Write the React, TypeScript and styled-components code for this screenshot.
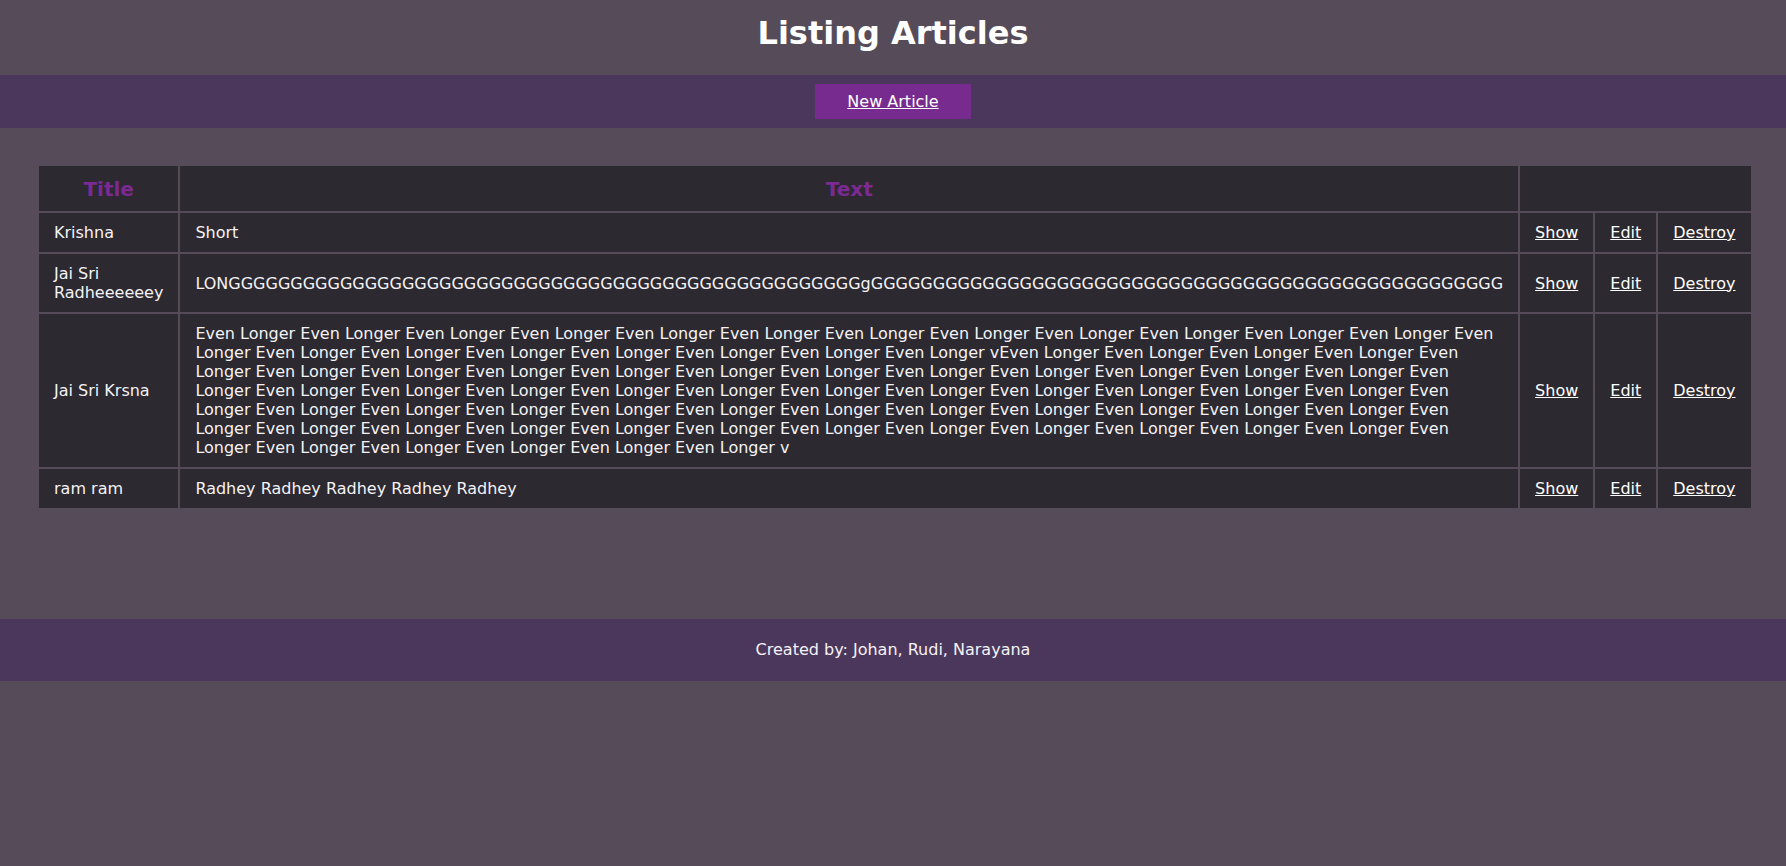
import React from "react";
import styled, { createGlobalStyle } from "styled-components";

const GlobalStyle = createGlobalStyle`
  html, body {
    margin: 0;
    padding: 0;
    background: #564b59;
  }
  body {
    font-family: "DejaVu Sans", "Liberation Sans", sans-serif;
    font-size: 16px;
    color: #f4f2f5;
  }
`;

const Header = styled.header`
  display: flex;
  justify-content: center;
  padding: 14px 0 23px;
`;

const PageTitle = styled.h1`
  margin: 0;
  font-size: 32px;
  font-weight: bold;
  color: #ffffff;
`;

const Nav = styled.nav`
  display: flex;
  justify-content: center;
  background: #4c375c;
  padding: 9px 0;
`;

const NavButton = styled.a`
  display: block;
  background: #782b8f;
  color: #ffffff;
  padding: 8px 32px;
  text-decoration: underline;
  line-height: 19px;
`;

const Main = styled.main`
  padding: 36px 34px 109px 37px;
`;

const Table = styled.table`
  width: 100%;
  border-collapse: collapse;
  background: #2c2930;
`;

const HeadCell = styled.th<{ $shrink?: boolean }>`
  border: 2px solid #564b59;
  color: #7b2a93;
  font-size: 20px;
  font-weight: bold;
  padding: 11px 15px 10px;
  text-align: center;
  ${(p) => (p.$shrink ? "width: 1%;" : "")}
`;

const Cell = styled.td<{ $shrink?: boolean }>`
  border: 2px solid #564b59;
  padding: 10px 15px;
  line-height: 19px;
  vertical-align: middle;
  text-align: left;
  ${(p) => (p.$shrink ? "width: 1%;" : "")}
`;

const ActionCell = styled(Cell)`
  width: 1%;
  white-space: nowrap;
`;

const ActionLink = styled.a`
  color: #ffffff;
  text-decoration: underline;
  cursor: pointer;
`;

const Footer = styled.footer`
  background: #4c375c;
  text-align: center;
  padding: 21px 0 22px;
  line-height: 19px;
`;

const repeat = (s: string, n: number) => Array(n).fill(s).join("");

const evenLonger =
  repeat("Even Longer ", 20) + "v" + repeat("Even Longer ", 58) + "v";

const articles = [
  { title: "Krishna", text: "Short" },
  {
    title: "Jai Sri Radheeeeeey",
    text: "LON" + "G".repeat(51) + "g" + "G".repeat(51),
  },
  { title: "Jai Sri Krsna", text: evenLonger },
  { title: "ram ram", text: "Radhey Radhey Radhey Radhey Radhey" },
];

export default function App() {
  return (
    <>
      <GlobalStyle />
      <Header>
        <PageTitle>Listing Articles</PageTitle>
      </Header>
      <Nav>
        <NavButton href="#">New Article</NavButton>
      </Nav>
      <Main>
        <Table>
          <thead>
            <tr>
              <HeadCell $shrink>Title</HeadCell>
              <HeadCell>Text</HeadCell>
              <HeadCell colSpan={3} />
            </tr>
          </thead>
          <tbody>
            {articles.map((a) => (
              <tr key={a.title}>
                <Cell $shrink>{a.title}</Cell>
                <Cell>{a.text}</Cell>
                <ActionCell>
                  <ActionLink href="#">Show</ActionLink>
                </ActionCell>
                <ActionCell>
                  <ActionLink href="#">Edit</ActionLink>
                </ActionCell>
                <ActionCell>
                  <ActionLink href="#">Destroy</ActionLink>
                </ActionCell>
              </tr>
            ))}
          </tbody>
        </Table>
      </Main>
      <Footer>Created by: Johan, Rudi, Narayana</Footer>
    </>
  );
}
